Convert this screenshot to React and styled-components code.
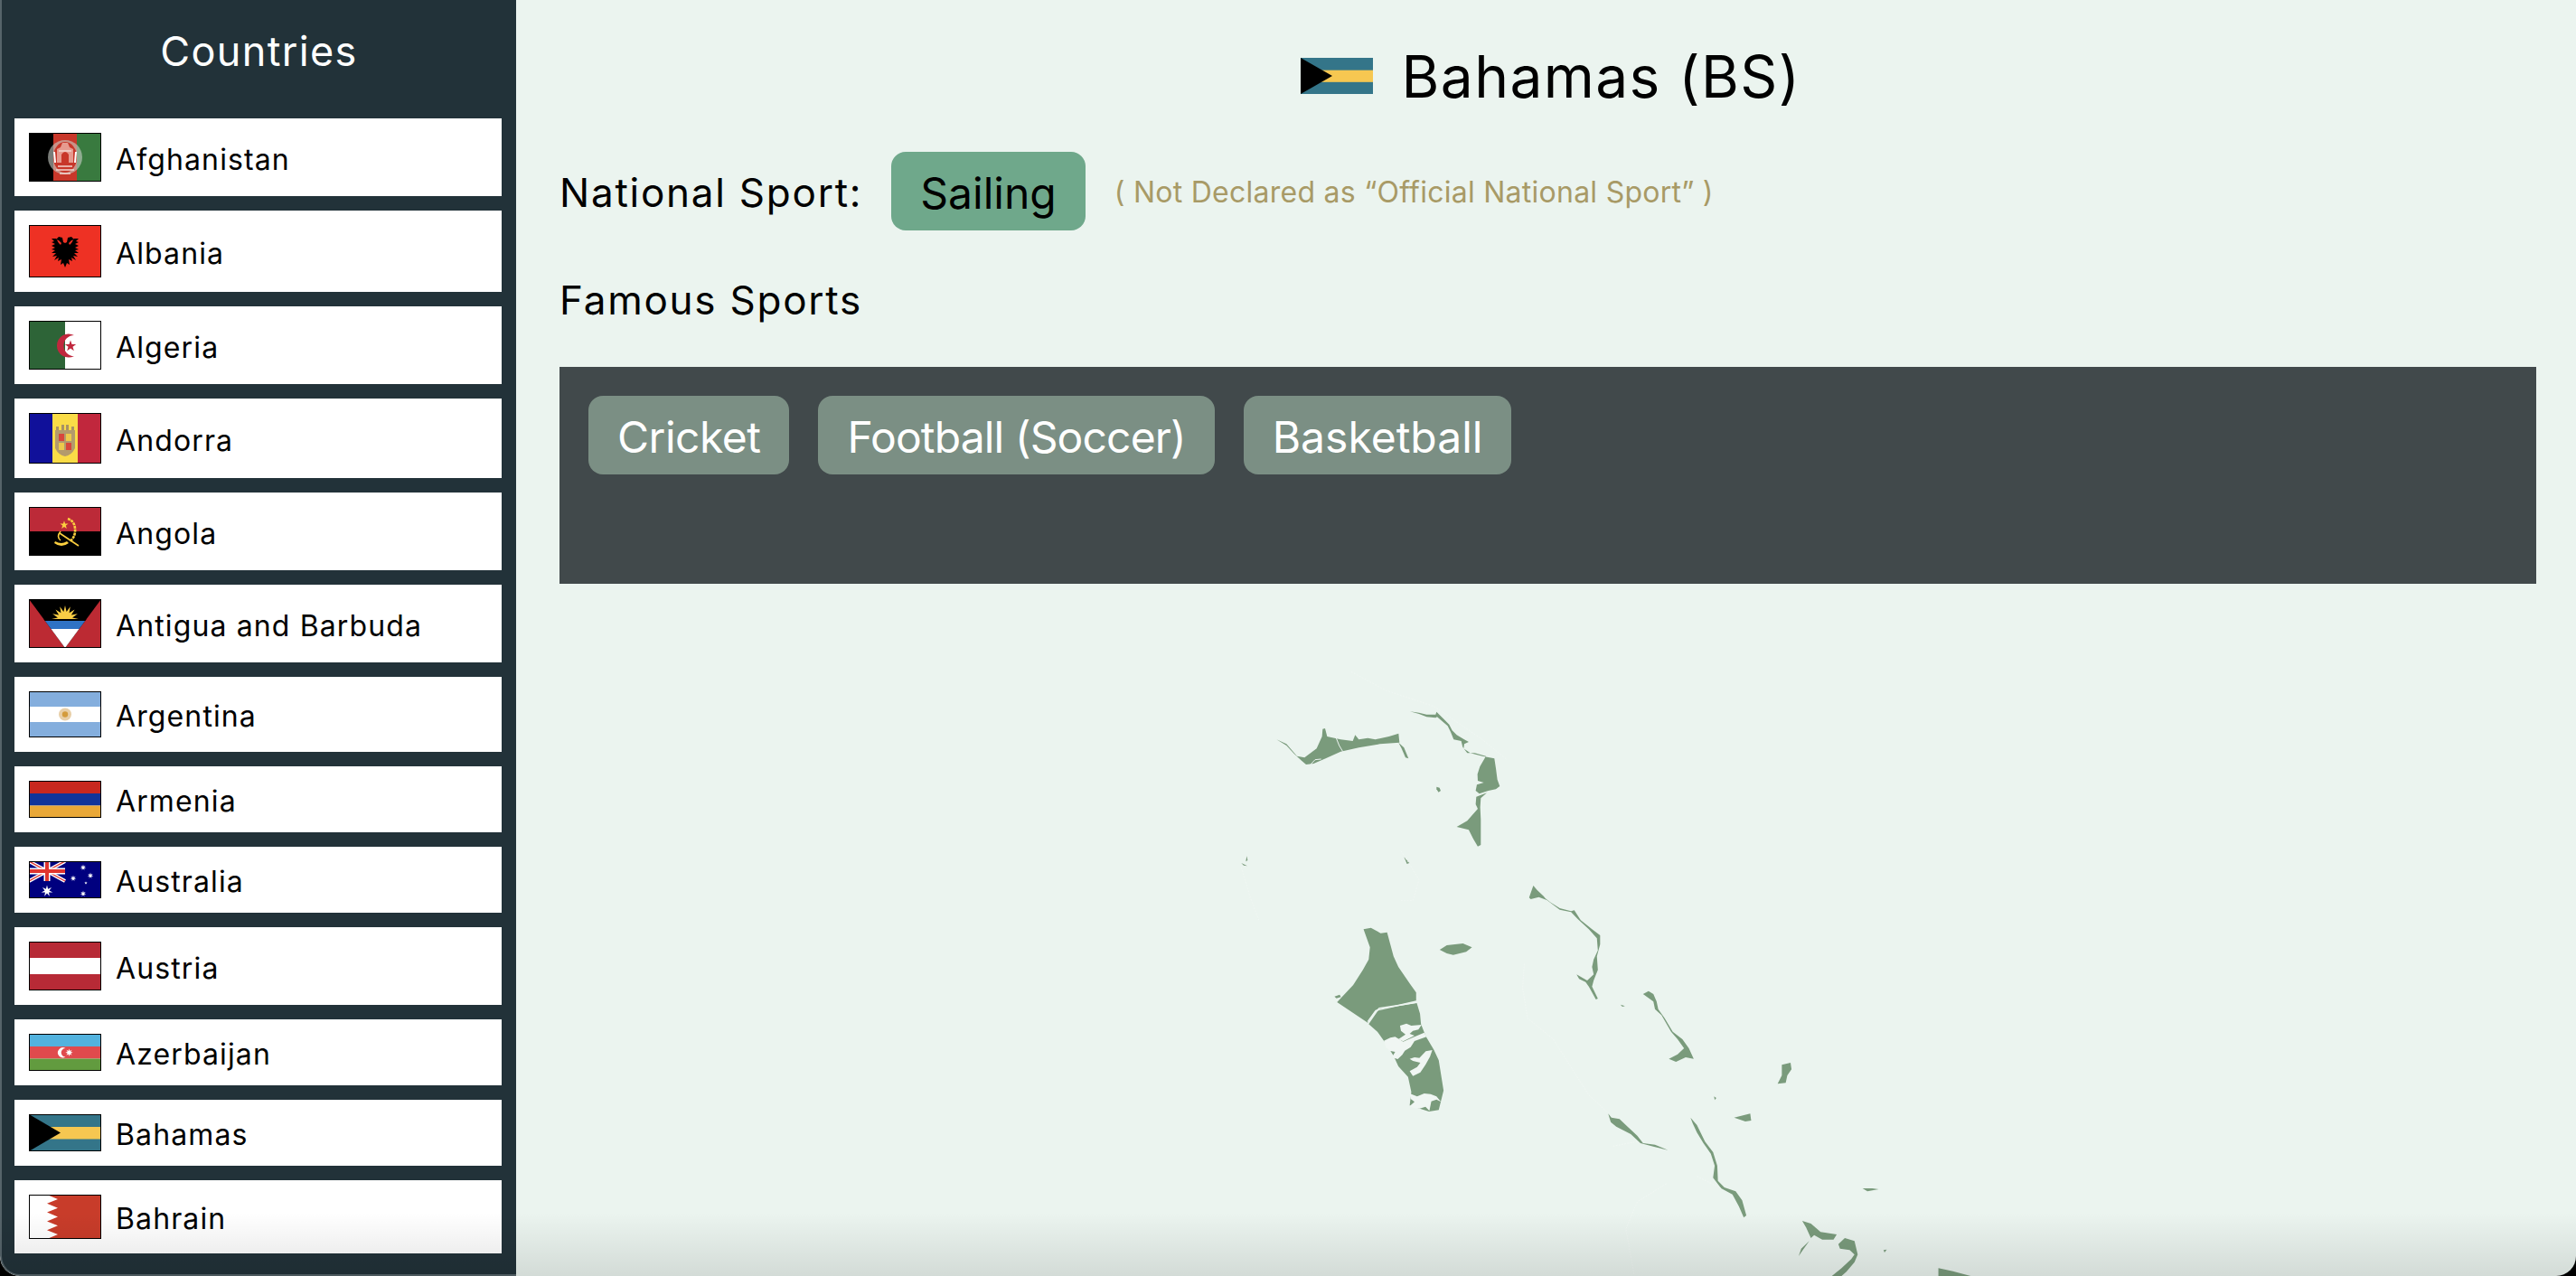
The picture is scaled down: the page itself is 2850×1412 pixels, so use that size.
import React from "react";
import styled, { createGlobalStyle } from "styled-components";

const GlobalStyle = createGlobalStyle`
  html, body {
    margin: 0;
    height: 100%;
    background: #000;
    overflow: hidden;
  }
  * {
    box-sizing: border-box;
  }
`;

// star / sun polygon points
const star = (cx, cy, r, n = 5, inner = 0.4) => {
  const pts = [];
  for (let i = 0; i < n * 2; i++) {
    const rad = i % 2 ? r * inner : r;
    const a = (Math.PI * i) / n - Math.PI / 2;
    pts.push(`${(cx + rad * Math.cos(a)).toFixed(2)},${(cy + rad * Math.sin(a)).toFixed(2)}`);
  }
  return pts.join(" ");
};

const Afghanistan = () => (
  <>
    <rect width="27" height="54" fill="#000" />
    <rect x="27" width="26" height="54" fill="#c8372a" />
    <rect x="53" width="27" height="54" fill="#397a3f" />
    <ellipse cx="40" cy="27" rx="19" ry="19" fill="#c9cfc8" opacity="0.6" />
    <ellipse cx="40" cy="27" rx="13" ry="17" fill="#c8372a" />
    <path d="M31 33V18l4-2 2-5h6l2 5 4 2v15z" fill="#e69a8f" />
    <path d="M36 33v-9q4-6 8 0v9z" fill="#c8372a" />
    <path d="M32 37h16M30 41h20M34 45h12M33 20h14" stroke="#f4d6d0" strokeWidth="1.6" />
    <path d="M28 21l1 12M52 21l-1 12" stroke="#fff" strokeWidth="2" />
  </>
);

const eagleHalf =
  "M40 47L38 42L35 44L36 38L32 40L33 36L28 39L31 34L26 35L30 31L25 31L29 28L25 27L29 25L25 23L29 21L25 19L28 18L25 15L30 15L33 20L35 22L36 20L33 17L30 16L33 13L37 14L38 19L40 20Z";

const Albania = () => (
  <>
    <rect width="80" height="58" fill="#ee3124" />
    <path d={eagleHalf} fill="#000" />
    <path d={eagleHalf} fill="#000" transform="translate(80 0) scale(-1 1)" />
  </>
);

const Algeria = () => (
  <>
    <rect width="40" height="54" fill="#2d6437" />
    <rect x="40" width="40" height="54" fill="#fff" />
    <path d="M50 17a13 13 0 1 0 0 23a11 11 0 1 1 0-23z" fill="#c0273d" transform="translate(0 -1)" />
    <polygon points={star(46, 28, 6.5)} fill="#c0273d" />
  </>
);

const Andorra = () => (
  <>
    <rect width="26" height="56" fill="#10109a" />
    <rect x="26" width="28" height="56" fill="#fadc47" />
    <rect x="54" width="26" height="56" fill="#c1273d" />
    <path d="M29 19h22v20q-4 8-11 9-7-1-11-9z" fill="#b39a6c" />
    <rect x="33" y="23" width="6" height="8" fill="#d8453c" />
    <rect x="41" y="23" width="6" height="8" fill="#ecc94b" />
    <rect x="33" y="33" width="6" height="8" fill="#ecc94b" />
    <rect x="41" y="33" width="6" height="8" fill="#d8453c" />
    <path d="M30 15h3v4h-3zM36 13h3v6h-3zM41 13h3v6h-3zM47 15h3v4h-3z" fill="#a99264" />
  </>
);

const Angola = () => (
  <>
    <rect width="80" height="27" fill="#bc2a38" />
    <rect y="27" width="80" height="27" fill="#000" />
    <path d="M43 13q9 3 8 15-1 7-6 10" fill="none" stroke="#fccf3f" strokeWidth="2.6" strokeDasharray="3 0.8" />
    <polygon points={star(39, 20, 4.8)} fill="#fccf3f" />
    <path d="M34 29l21 14" stroke="#fccf3f" strokeWidth="1.6" />
    <path d="M29 38q7 4 13 0l2 2q-8 6-16 0z" fill="#fccf3f" />
    <path d="M35 27q-5 6 0 10" fill="none" stroke="#fccf3f" strokeWidth="1.6" />
  </>
);

const Antigua = () => (
  <>
    <rect width="80" height="54" fill="#bc2a33" />
    <polygon points="0,0 80,0 40,54" fill="#000" />
    <polygon points={star(40, 22, 15, 16, 0.55)} fill="#f8cd45" />
    <polygon points="16.3,22 63.7,22 62,24 18,24" fill="#000" />
    <polygon points="17.8,24 62.2,24 55.5,33 24.5,33" fill="#2f72c4" />
    <polygon points="24.5,33 55.5,33 40,54" fill="#fff" />
  </>
);

const Argentina = () => (
  <>
    <rect width="80" height="51" fill="#84aedd" />
    <rect y="17" width="80" height="17" fill="#fff" />
    <circle cx="40" cy="25.5" r="7" fill="#e8cfa8" />
    <circle cx="40" cy="25.5" r="3.2" fill="#d39b3c" />
  </>
);

const Armenia = () => (
  <>
    <rect width="80" height="14" fill="#c8281f" />
    <rect y="14" width="80" height="13.5" fill="#11349a" />
    <rect y="27.5" width="80" height="13.5" fill="#e9a838" />
  </>
);

const Australia = () => (
  <>
    <rect width="80" height="41" fill="#00007f" />
    <path d="M0 0l40 22M40 0L0 22" stroke="#fff" strokeWidth="4" />
    <path d="M0 0l40 22M40 0L0 22" stroke="#e0352f" strokeWidth="1.4" />
    <path d="M20 0v22M0 11h40" stroke="#fff" strokeWidth="7" />
    <path d="M20 0v22M0 11h40" stroke="#e0352f" strokeWidth="4" />
    <polygon points={star(20, 33, 6.5, 7, 0.4)} fill="#fff" />
    <polygon points={star(60, 7, 3.4, 7, 0.4)} fill="#fff" />
    <polygon points={star(49, 19, 3.4, 7, 0.4)} fill="#fff" />
    <polygon points={star(68, 16, 3.4, 7, 0.4)} fill="#fff" />
    <polygon points={star(60, 36, 3.4, 7, 0.4)} fill="#fff" />
    <polygon points={star(63, 24, 1.8, 5, 0.4)} fill="#fff" />
  </>
);

const Austria = () => (
  <>
    <rect width="80" height="54" fill="#b72a36" />
    <rect y="18" width="80" height="18" fill="#fff" />
  </>
);

const Azerbaijan = () => (
  <>
    <rect width="80" height="14" fill="#52b2de" />
    <rect y="14" width="80" height="13.5" fill="#e04a4d" />
    <rect y="27.5" width="80" height="13.5" fill="#629b3f" />
    <path d="M40.5 16a5.6 5.6 0 1 0 0 9.6a4.6 4.6 0 1 1 0-9.6z" fill="#fff" />
    <polygon points={star(44.5, 20.8, 4.2, 8, 0.45)} fill="#fff" />
  </>
);

const Bahamas = () => (
  <>
    <rect width="80" height="41" fill="#347589" />
    <rect y="14" width="80" height="13.5" fill="#f6c751" />
    <polygon points="0,0 35,20.5 0,41" fill="#000" />
  </>
);

const Bahrain = () => (
  <>
    <rect width="80" height="49" fill="#c83c2a" />
    <polygon
      points="0,0 20,0 32,4.9 20,9.8 32,14.7 20,19.6 32,24.5 20,29.4 32,34.3 20,39.2 32,44.1 20,49 0,49"
      fill="#fff"
    />
  </>
);

const countries = [
  { name: "Afghanistan", h: 54, Art: Afghanistan },
  { name: "Albania", h: 58, Art: Albania },
  { name: "Algeria", h: 54, Art: Algeria },
  { name: "Andorra", h: 56, Art: Andorra },
  { name: "Angola", h: 54, Art: Angola },
  { name: "Antigua and Barbuda", h: 54, Art: Antigua },
  { name: "Argentina", h: 51, Art: Argentina },
  { name: "Armenia", h: 41, Art: Armenia },
  { name: "Australia", h: 41, Art: Australia },
  { name: "Austria", h: 54, Art: Austria },
  { name: "Azerbaijan", h: 41, Art: Azerbaijan },
  { name: "Bahamas", h: 41, Art: Bahamas },
  { name: "Bahrain", h: 49, Art: Bahrain },
];

const famous = [
  { name: "Cricket", track: "-0.5px" },
  { name: "Football (Soccer)", track: "-0.85px" },
  { name: "Basketball", track: "0" },
];

const Land = ({ pts }) => <polygon points={pts} />;
const Mangrove = ({ pts }) => <polygon points={pts} fill="#f0f6f3" />;

// outlines traced in crop coordinates, each group maps its crop back to page pixels
const BahamasMap = () => (
  <MapSvg viewBox="619 646 2187 766" width="2187" height="766">
    <g fill="#7a9b7c">
      <g transform="translate(1340 740) scale(0.3333)">
        <Land pts="217,235 250,255 275,282 300,305 315,318 340,315 380,298 430,275 490,262 560,250 625,245 622,215 590,225 545,235 520,230 490,235 478,220 470,240 430,235 385,225 378,198 370,200 368,225 350,265 310,295 285,290 250,250" />
        <Land pts="660,142 690,146 715,152 745,152 748,143 770,165 790,185 800,205 815,220 840,235 855,243 840,250 838,265 860,280 900,290 940,298 945,330 950,368 958,390 945,400 920,405 890,415 878,405 882,385 905,378 885,372 884,350 892,325 912,290 875,280 850,280 835,260 830,240 805,235 795,210 785,190 750,160 745,163 715,160 690,150" />
        <Land pts="915,412 895,430 893,460 895,500 895,585 885,590 870,565 855,535 815,525 850,505 885,465 878,450 880,425" />
        <Land pts="748,392 758,395 762,405 755,410 748,400" />
        <Land pts="100,645 120,655 108,653" />
        <Land pts="118,622 121,636 115,640" />
        <Land pts="640,625 658,645 650,648" />
        <Land pts="622,245 640,262 655,298 645,295 632,265" />
        <path d="M415 230L425 255L437 275M330 318L345 302L365 300" fill="none" stroke="#edf5f1" strokeWidth="3" />
        <path
          d="M465 10L580 72L740 125L900 235L980 300M100 660L130 760L160 840M630 605L690 700L670 770L625 770"
          fill="none"
          stroke="#f3f8f5"
          strokeWidth="2"
          strokeDasharray="5 5"
        />
      </g>
      <g transform="translate(1440 970) scale(0.3571 0.3333)">
        <Land pts="192,175 215,170 245,188 265,185 275,225 285,265 300,300 335,355 355,385 355,412 300,425 240,435 225,450 205,485 110,417 160,360 190,310 208,275 212,235" />
        <Land pts="357,420 240,440 208,490 235,515 255,545 285,595 300,630 330,665 340,715 335,760 395,780 425,775 440,710 425,610 410,575 385,530 370,490 367,455" />
        <Land pts="102,398 118,392 122,400 108,404" />
        <path d="M205 482L230 445L300 428L357 417" fill="none" stroke="#edf5f1" strokeWidth="4" />
        <Mangrove pts="305,495 325,488 340,495 372,492 362,508 345,512 335,522 350,528 315,547 300,540 322,524 308,512" />
        <Mangrove pts="255,545 275,535 290,532 315,548 340,536 380,518 387,532 350,546 338,566 320,578 312,592 298,606 280,600 290,582 272,578 262,568" />
        <Mangrove pts="335,605 350,600 365,602 385,580 405,576 398,598 384,625 368,650 345,662 335,646 358,632 368,618 345,612" />
        <Mangrove pts="335,720 358,730 380,720 400,722 418,730 432,748 418,740 402,746 396,778 384,764 366,770 348,768 335,762 350,748 338,738" />
        <Land pts="428,243 450,228 500,222 528,235 510,250 470,260 450,255" />
        <Land pts="705,70 718,30 730,45 750,65 755,72 770,85 800,105 835,115 845,112 865,145 900,175 925,195 925,225 915,265 918,310 905,345 900,365 918,405 912,408 890,365 880,350 860,340 852,325 885,345 905,325 900,300 905,275 918,245 915,205 890,175 855,140 835,118 800,110 760,78 735,68 710,75" />
        <Land pts="1058,390 1075,380 1090,390 1100,415 1105,440 1125,470 1150,515 1180,540 1200,570 1215,605 1190,600 1160,615 1138,605 1165,590 1185,570 1165,540 1145,515 1115,460 1095,440 1090,415" />
        <Land pts="1488,625 1515,618 1518,640 1505,660 1500,685 1475,688 1488,660" />
        <Land pts="1340,800 1390,787 1393,810 1375,813" />
        <Land pts="950,787 960,800 985,805 1010,830 1040,860 1058,885 1095,890 1135,908 1095,898 1050,885 1020,855 975,830 958,815" />
        <Land pts="1205,800 1225,825 1250,880 1275,915 1288,960 1290,1010 1310,1032 1345,1045 1365,1075 1378,1125 1370,1132 1355,1095 1335,1055 1300,1035 1275,1000 1280,960 1268,920 1245,885 1225,850 1212,820" />
        <Land pts="988,425 1002,430 994,432" />
        <Land pts="1278,730 1285,735 1280,742" />
        <path
          d="M690 290L685 370L700 470L780 540L830 625L890 725L950 785M965 895L1040 880M1225 995L1300 1035M1130 1020L1040 1080L1005 1170L1030 1320"
          fill="none"
          stroke="#f3f8f5"
          strokeWidth="2"
          strokeDasharray="5 4"
        />
      </g>
      <g transform="translate(1700 1000) scale(0.3571 0.3333)">
        <Land pts="823,1053 850,1062 880,1090 930,1098 920,1115 885,1115 860,1100 850,1110 835,1075" />
        <Land pts="845,1120 825,1150 812,1170 820,1145" />
        <Land pts="935,1130 955,1110 985,1120 995,1165 985,1190 960,1222 945,1236 915,1236 945,1210 975,1180 985,1165 970,1150 940,1145" />
        <Land pts="1010,945 1040,945 1060,948 1025,955" />
        <Land pts="1245,1210 1290,1220 1345,1236 1245,1236" />
        <Land pts="1075,1150 1085,1148 1078,1158" />
      </g>
    </g>
  </MapSvg>
);

const App = () => (
  <>
    <GlobalStyle />
    <Page>
      <Sidebar>
        <SideTitle>Countries</SideTitle>
        <CountryList>
          {countries.map(({ name, h, Art }) => (
            <CountryRow key={name}>
              <FlagThumb viewBox={`0 0 80 ${h}`} width="80" height={h} preserveAspectRatio="none">
                <Art />
              </FlagThumb>
              <CountryName>{name}</CountryName>
            </CountryRow>
          ))}
        </CountryList>
      </Sidebar>
      <Main>
        <TitleRow>
          <svg viewBox="0 0 80 41" width="80" height="40" preserveAspectRatio="none">
            <Bahamas />
          </svg>
          <Title>Bahamas (BS)</Title>
        </TitleRow>
        <SportRow>
          <SportLabel>National Sport:</SportLabel>
          <Chip $national>Sailing</Chip>
          <Note>( Not Declared as “Official National Sport” )</Note>
        </SportRow>
        <FamousHeading>Famous Sports</FamousHeading>
        <FamousPanel>
          {famous.map((s) => (
            <Chip key={s.name} $track={s.track}>
              {s.name}
            </Chip>
          ))}
        </FamousPanel>
        <BahamasMap />
      </Main>
      <BottomFade />
    </Page>
  </>
);

const Page = styled.div`
  position: relative;
  display: flex;
  width: 2850px;
  height: 1412px;
  overflow: hidden;
  border-radius: 0 0 22px 22px;
  background: #ebf4ef;
  font-family: Inter, "Open Sans", sans-serif;
  color: #000;
`;

const Sidebar = styled.aside`
  flex: 0 0 571px;
  height: 100%;
  padding: 0 16px 0 16px;
  background: #223239;
  border-left: 2px solid #56646a;
  border-bottom: 2px solid #56646a;
  border-bottom-left-radius: 22px;
  overflow: hidden;
`;

const SideTitle = styled.h2`
  margin: 0;
  height: 131px;
  padding-top: 28px;
  text-align: center;
  font-size: 45px;
  line-height: 58px;
  font-weight: 400;
  letter-spacing: 0.03em;
  color: #fff;
`;

const CountryList = styled.div`
  display: flex;
  flex-direction: column;
  gap: 16px;
  margin-left: -2px;
`;

const CountryRow = styled.div`
  display: flex;
  align-items: center;
  gap: 16px;
  padding: 16px;
  background: #fff;
`;

const FlagThumb = styled.svg`
  display: block;
  flex: none;
  outline: 1px solid #000;
  outline-offset: -1px;
`;

const CountryName = styled.span`
  padding-top: 4px;
  font-size: 32px;
  letter-spacing: 0.035em;
  line-height: 37px;
`;

const Main = styled.main`
  flex: 1;
  min-width: 0;
  padding: 0 44px 0 48px;
  overflow: hidden;
`;

const TitleRow = styled.div`
  display: flex;
  align-items: center;
  justify-content: center;
  gap: 32px;
  height: 168px;
  padding-left: 6px;
`;

const Title = styled.h1`
  margin: 0;
  font-size: 64px;
  font-weight: 400;
  letter-spacing: 0.022em;
`;

const SportRow = styled.div`
  display: flex;
  align-items: center;
  height: 87px;
`;

const SportLabel = styled.span`
  margin-right: 32px;
  padding-top: 2px;
  font-size: 44px;
  letter-spacing: 0.04em;
`;

const Chip = styled.span`
  display: inline-flex;
  align-items: center;
  height: 87px;
  padding: 3px 32px 0;
  border-radius: 16px;
  font-size: 48px;
  letter-spacing: ${(p) => p.$track || "0"};
  background: ${(p) => (p.$national ? "#6fa88b" : "#7b8f84")};
  color: ${(p) => (p.$national ? "#000" : "#fff")};
`;

const Note = styled.span`
  margin-left: 32px;
  padding-top: 2px;
  font-size: 32px;
  letter-spacing: 0.008em;
  color: #a89a66;
`;

const FamousHeading = styled.h3`
  margin: 0;
  height: 151px;
  padding-top: 2px;
  display: flex;
  align-items: center;
  font-size: 44px;
  font-weight: 400;
  letter-spacing: 0.04em;
`;

const FamousPanel = styled.div`
  display: flex;
  align-items: flex-start;
  gap: 32px;
  height: 240px;
  padding: 32px;
  background: #41494b;
`;

const MapSvg = styled.svg`
  display: block;
`;

const BottomFade = styled.div`
  position: absolute;
  left: 0;
  right: 0;
  bottom: 0;
  height: 70px;
  pointer-events: none;
  background: linear-gradient(to bottom, rgba(0, 0, 0, 0), rgba(0, 0, 0, 0.1));
`;

export default App;
